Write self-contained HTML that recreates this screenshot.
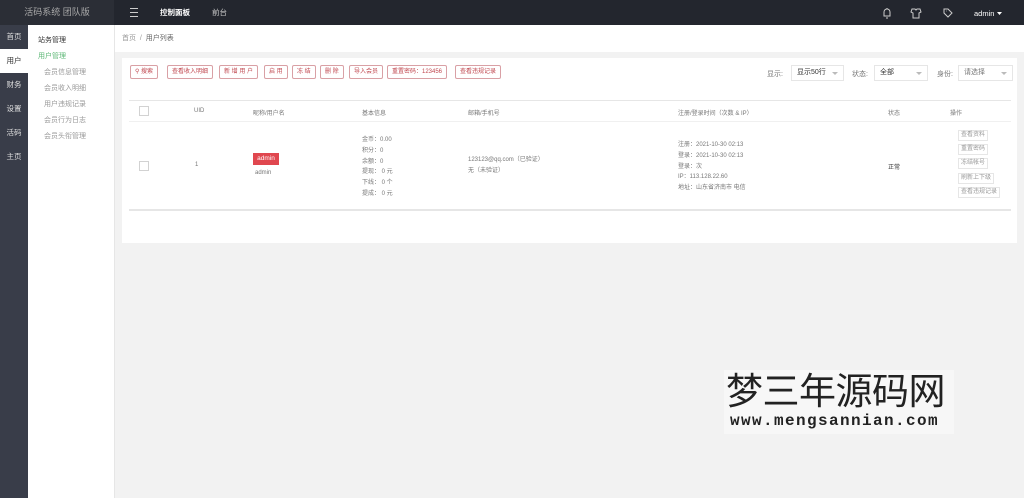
<!DOCTYPE html>
<html><head><meta charset="utf-8"><style>
*{margin:0;padding:0;box-sizing:border-box}
body{width:1024px;height:498px;overflow:hidden;background:#f2f2f2;font-family:"Liberation Sans","Noto Sans CJK SC",sans-serif;font-size:7px;color:#555;position:relative}
.abs{position:absolute}
.top{left:0;top:0;width:1024px;height:25px;background:#23262e}
.brand{left:0;top:0;width:114px;height:25px;background:#2b2e36;color:#aaa;font-size:9px;line-height:25px;text-align:center}
.icol{left:0;top:25px;width:28px;height:473px;background:#393d49}
.icol div{height:24px;line-height:24px;color:#ddd;font-size:7.5px;text-align:center}
.icol .on{background:#fff;color:#333}
.sub{left:28px;top:25px;width:87px;height:473px;background:#fff;border-right:1px solid #e6e6e6}
.sub div{position:absolute;font-size:7px;color:#999}
.bc{left:115px;top:25px;width:909px;height:27px;background:#fff;color:#999;font-size:7px;line-height:27px;padding-left:7px}
.card{left:122px;top:58px;width:895px;height:185px;background:#fff}
.btn{position:absolute;top:7px;height:14px;border:1px solid #d9a0a5;border-radius:2px;color:#c0474f;font-size:6px;line-height:12px;padding:0 4px;white-space:nowrap}
.sel{position:absolute;top:7px;height:16px;border:1px solid #e6e6e6;font-size:7px;line-height:14px;padding-left:5px;color:#333}
.sel:after{content:"";position:absolute;right:5px;top:6px;border:3px solid transparent;border-top-color:#bbb}
.lbl{position:absolute;top:11px;font-size:7px;color:#777}
.t{position:absolute;font-size:6px;color:#777;white-space:nowrap}
.cb{position:absolute;width:10px;height:10px;border:1px solid #d2d2d2}
.line{position:absolute;left:7px;width:882px;height:1px;background:#e6e6e6}
.op{position:absolute;left:836px;height:11px;border:1px solid #e6e6e6;font-size:6px;color:#999;line-height:9px;padding:0 2px;white-space:nowrap}
</style></head><body>
<div class="abs top"></div>
<div class="abs brand">活码系统 团队版</div>
<div class="abs" style="left:130px;top:8px;width:8px;height:9px;border-top:1px solid #ccc;border-bottom:1px solid #ccc"><div style="margin-top:3px;height:1px;background:#ccc"></div></div>
<div class="abs" style="left:160px;top:0;line-height:25px;color:#fff;font-size:7.5px;font-weight:bold">控制面板</div>
<div class="abs" style="left:212px;top:0;line-height:25px;color:#ccc;font-size:7.5px">前台</div>
<svg class="abs" style="left:880px;top:7px" width="130" height="12" fill="none" stroke="#ccc" stroke-width="1">
<path d="M4 9V5a3 3 0 0 1 6 0v4zM6 11h2M7 2V1"/>
<path d="M32 2l3 0 1 1 1-1 3 0 1 3-2 1v5h-6V6l-2-1z"/>
<path d="M64 2h4l4 4-4 4-4-4zM66 4h.5"/>
<text x="94" y="9" fill="#fff" stroke="none" font-size="7.5" font-family="Liberation Sans">admin</text>
<path d="M117 5h5l-2.5 3z" fill="#fff" stroke="none"/>
</svg>
<div class="abs icol"><div>首页</div><div class="on">用户</div><div>财务</div><div>设置</div><div>活码</div><div>主页</div></div>
<div class="abs sub">
<div style="left:10px;top:10px;color:#333">站务管理</div>
<div style="left:10px;top:26px;color:#5fb878">用户管理</div>
<div style="left:16px;top:42px">会员信息管理</div>
<div style="left:16px;top:58px">会员收入明细</div>
<div style="left:16px;top:74px">用户违规记录</div>
<div style="left:16px;top:90px">会员行为日志</div>
<div style="left:16px;top:106px">会员头衔管理</div>
</div>
<div class="abs bc">首页 &nbsp;/&nbsp; <span style="color:#666">用户列表</span></div>
<div class="abs card">
<div class="btn" style="left:8px">&#9906; 搜索</div>
<div class="btn" style="left:45px">查看收入明细</div>
<div class="btn" style="left:97px">新 增 用 户</div>
<div class="btn" style="left:142px">启 用</div>
<div class="btn" style="left:170px">冻 结</div>
<div class="btn" style="left:198px">删 除</div>
<div class="btn" style="left:227px">导入会员</div>
<div class="btn" style="left:265px">重置密码：123456</div>
<div class="btn" style="left:333px">查看违规记录</div>
<div class="lbl" style="left:645px">显示:</div>
<div class="sel" style="left:669px;width:53px">显示50行</div>
<div class="lbl" style="left:730px">状态:</div>
<div class="sel" style="left:752px;width:54px">全部</div>
<div class="lbl" style="left:815px">身份:</div>
<div class="sel" style="left:836px;width:55px;color:#777">请选择</div>
<div class="line" style="top:42px"></div>
<div class="cb" style="left:17px;top:48px"></div>
<div class="t" style="left:72px;top:50px">UID</div>
<div class="t" style="left:131px;top:50px">昵称/用户名</div>
<div class="t" style="left:240px;top:50px">基本信息</div>
<div class="t" style="left:346px;top:50px">邮箱/手机号</div>
<div class="t" style="left:556px;top:50px">注册/登录时间（次数 &amp; IP）</div>
<div class="t" style="left:766px;top:50px">状态</div>
<div class="t" style="left:828px;top:50px">操作</div>
<div class="line" style="top:63px;background:#f0f0f0"></div>
<div class="cb" style="left:17px;top:103px"></div>
<div class="t" style="left:73px;top:104px">1</div>
<div class="abs" style="left:131px;top:95px;width:26px;height:12px;background:#e0474f;color:#fff;font-size:6.5px;line-height:12px;text-align:center">admin</div>
<div class="t" style="left:133px;top:112px">admin</div>
<div class="t" style="left:240px;top:77px;line-height:10.8px">金币：0.00<br>积分：0<br>余额：0<br>提现： 0 元<br>下线： 0 个<br>提成： 0 元</div>
<div class="t" style="left:346px;top:97px;line-height:10.8px">123123@qq.com（已验证）<br>无（未验证）</div>
<div class="t" style="left:556px;top:82px;line-height:10.8px">注册：2021-10-30 02:13<br>登录：2021-10-30 02:13<br>登录：次<br>IP：113.128.22.60<br>地址：山东省济南市 电信</div>
<div class="t" style="left:766px;top:104px;color:#333">正常</div>
<div class="op" style="top:72px">查看资料</div>
<div class="op" style="top:86px">重置密码</div>
<div class="op" style="top:100px">冻结帐号</div>
<div class="op" style="top:115px">刷新上下级</div>
<div class="op" style="top:129px">查看违规记录</div>
<div class="line" style="top:151px;height:2px"></div>
</div>
<div class="abs" style="left:724px;top:370px;width:230px;height:64px;background:#f7f7f7"></div>
<div class="abs" style="left:726px;top:366px;font-size:37px;color:#222;font-family:'Noto Sans CJK SC',sans-serif;line-height:44px;letter-spacing:-0.5px;white-space:nowrap">梦三年源码网</div>
<div class="abs" style="left:730px;top:412px;font-size:16px;color:#222;font-family:'Liberation Mono',monospace;font-weight:bold;letter-spacing:1.4px;white-space:nowrap">www.mengsannian.com</div>
</body></html>
